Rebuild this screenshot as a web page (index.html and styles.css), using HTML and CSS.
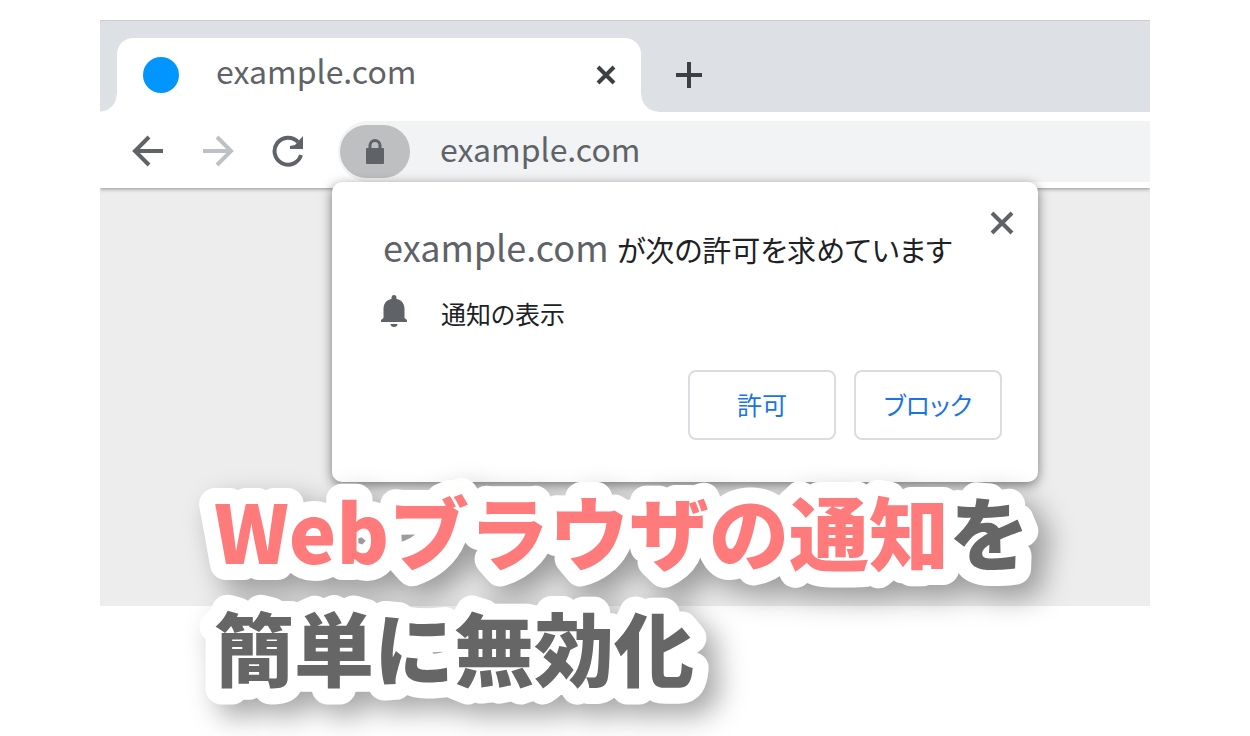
FILE: index.html
```html
<!DOCTYPE html>
<html lang="ja">
<head>
<meta charset="utf-8">
<title>Webブラウザの通知を簡単に無効化</title>
<meta name="viewport" content="width=device-width, initial-scale=1">
<link rel="stylesheet" href="styles.css">
</head>
<body>
<main class="cover">
  <section class="browser">
    <div class="tab-strip">
      <div class="tab">
        <span class="favicon"></span>
        <span class="tab-title">example.com</span>
        <button class="icon-button" aria-label="タブを閉じる">
          <svg class="tab-close" viewBox="0 0 20 20"><path d="M2 2 18 18M18 2 2 18"/></svg>
        </button>
      </div>
      <button class="icon-button" aria-label="新しいタブ">
        <svg class="tab-add" viewBox="0 0 28 28"><path d="M14 1V27M1 14H27"/></svg>
      </button>
    </div>
    <div class="toolbar">
      <nav class="nav">
        <button class="icon-button" aria-label="戻る">
          <svg class="arrow" viewBox="0 0 32 32"><path d="M31 16H3M17 2 3 16 17 30"/></svg>
        </button>
        <button class="icon-button" aria-label="進む">
          <svg class="arrow arrow-off" viewBox="0 0 32 32"><path d="M1 16H29M15 2 29 16 15 30"/></svg>
        </button>
        <button class="icon-button" aria-label="再読み込み">
          <svg class="reload" viewBox="0 0 32 32"><path class="line" d="M29 20A13.500 13.500 0 1 1 26 7"/><path class="solid" d="M31 1V14H18V11L23 10Z"/></svg>
        </button>
      </nav>
      <div class="omnibox">
        <button class="site-info" aria-label="サイト情報">
          <svg class="lock" viewBox="0 0 18 26"><path class="line" d="M4 10V6.500A5 5 0 0 1 14 6.500V10"/><rect class="solid" y="9" width="18" height="16" rx="1"/></svg>
        </button>
        <input class="address" aria-label="アドレス" value="example.com">
      </div>
    </div>
    <div class="page"></div>
    <div class="prompt" role="dialog" aria-labelledby="prompt-title">
      <button class="icon-button prompt-close" aria-label="閉じる">
        <svg class="dialog-close" viewBox="0 0 24 24"><path d="M2 2 22 22M22 2 2 22"/></svg>
      </button>
      <p class="prompt-title" id="prompt-title"><span class="origin">example.com</span> が次の許可を求めています</p>
      <div class="permission">
        <svg class="bell" viewBox="0 0 26 32"><path d="M13 0c1.600 0 2.500 1 2.500 3v1C21 5 23.500 9 23.500 14v9L26 25v2H0v-2l2.500-2v-9C2.500 9 5 5 10.500 4V3c0-2 .9-3 2.500-3ZM9.500 29h7c0 2-1.500 3-3.500 3s-3.500-1-3.500-3Z"/></svg>
        <span>通知の表示</span>
      </div>
      <div class="actions">
        <button class="action">許可</button>
        <button class="action">ブロック</button>
      </div>
    </div>
  </section>
  <h1 class="headline">
    <svg class="headline-art" width="810" height="232">
      <use class="outline" href="#headline-text"/>
      <text id="headline-text"><tspan class="accent" x="0" y="94">Webブラウザの通知</tspan><tspan class="plain">を</tspan><tspan class="plain" x="0" y="210">簡単に無効化</tspan></text>
    </svg>
  </h1>
</main>
</body>
</html>
```
FILE: styles.css
```css
* { box-sizing: border-box; }

body {
  margin: 0;
  background: #fff;
  color: #5f6368;
  font-family: "Noto Sans CJK JP", sans-serif;
}

button, input {
  border: 0;
  padding: 0;
  margin: 0;
  background: none;
  color: inherit;
  font: inherit;
}

svg { display: block; fill: none; stroke: currentColor; }

.cover {
  position: relative;
  min-height: 100vh;
  padding: 20px 8%;
  overflow: hidden;
}

.browser { position: relative; }

.tab-strip {
  display: flex;
  align-items: center;
  gap: 34px;
  height: 92px;
  padding: 17px 17px 0;
  border-top: 1px solid #cdcdcf;
  background: #dde1e6;
  color: #3c4043;
}

.tab {
  position: relative;
  display: flex;
  align-items: center;
  width: 524px;
  height: 100%;
  padding: 0 25px 0 26px;
  border-radius: 16px 16px 0 0;
  background: #fff;
}

.tab::before, .tab::after {
  content: "";
  position: absolute;
  bottom: 0;
  width: 17px;
  height: 17px;
}
.tab::before { right: 100%; background: radial-gradient(circle at 0 0, transparent 16px, #fff 17px); }
.tab::after { left: 100%; background: radial-gradient(circle at 100% 0, transparent 16px, #fff 17px); }

.favicon {
  width: 36px;
  height: 36px;
  margin-right: 37px;
  border-radius: 50%;
  background: #0095ff;
}

.tab-title {
  flex: 1;
  color: #5f6368;
  font-size: 32px;
  line-height: 40px;
  padding-bottom: 10px;
}

.icon-button { display: block; flex: none; }

.tab-close { width: 20px; height: 20px; stroke-width: 4; }
.tab-add { width: 28px; height: 28px; stroke-width: 4; }

.toolbar {
  position: relative;
  z-index: 1;
  display: flex;
  align-items: center;
  height: 76px;
  padding: 3px 0 0 32px;
  background: #fff;
  box-shadow: 0 1px 4px rgba(0, 0, 0, .4);
  clip-path: inset(0 0 -8px 0);
}

.nav { display: flex; gap: 38px; margin-right: 34px; padding-bottom: 2px; }
.arrow, .reload { width: 32px; height: 32px; stroke-width: 4; }
.arrow-off { color: #bdc1c6; }
.line { stroke-width: 4; }
.solid { fill: currentColor; stroke: none; }

.omnibox {
  display: flex;
  flex: 1;
  align-items: center;
  height: 61px;
  padding-left: 2px;
  border-radius: 30px 0 0 30px;
  background: #f1f3f4;
}

.site-info {
  display: flex;
  flex: none;
  align-items: center;
  justify-content: center;
  width: 70px;
  height: 53px;
  border-radius: 27px;
  background: #bdbfc1;
}

.lock { width: 18px; height: 26px; }
.lock .line { stroke-width: 3; }

.address {
  flex: 1;
  min-width: 0;
  height: 54px;
  margin-left: 30px;
  padding-bottom: 8px;
  font-size: 32px;
}

.page { height: 418px; background: #ededed; }

.prompt {
  position: absolute;
  z-index: 2;
  top: 162px;
  left: 232px;
  width: 706px;
  padding: 42px 36px 42px 49px;
  border-radius: 10px;
  background: #fff;
  box-shadow: 0 3px 12px rgba(0, 0, 0, .5);
}

.prompt-close { position: absolute; top: 29px; right: 24px; }
.dialog-close { width: 24px; height: 24px; stroke-width: 4; }

.prompt-title {
  margin: 0 0 0 2px;
  color: #202124;
  font-size: 29px;
  line-height: 50px;
  font-feature-settings: "palt";
}
.origin { margin-right: 2px; color: #5f6368; font-size: 36px; line-height: 1; }

.permission {
  display: flex;
  align-items: center;
  gap: 34px;
  height: 50px;
  margin-top: 14px;
  color: #202124;
  font-size: 25px;
  font-feature-settings: "palt";
}
.bell { width: 26px; height: 32px; margin-bottom: 4px; fill: #5f6368; stroke: none; }

.actions { display: flex; justify-content: flex-end; gap: 18px; margin-top: 32px; }

.action {
  width: 148px;
  height: 70px;
  padding-bottom: 2px;
  border: 2px solid #dadce0;
  border-radius: 8px;
  color: #1a73e8;
  font-size: 25px;
  font-feature-settings: "palt";
}

.headline {
  position: absolute;
  z-index: 3;
  top: 470px;
  left: 214px;
  margin: 0;
  font-size: 80px;
  font-weight: 900;
}

.headline-art {
  --accent: #ff7b7b;
  --plain: #666;
  overflow: visible;
  stroke: none;
}
.accent { fill: var(--accent); }
.plain { fill: var(--plain); }

/* White rounded outline with a soft shadow, painted behind the text. */
.outline {
  --accent: #fff;
  --plain: #fff;
  stroke: #fff;
  stroke-width: 32px;
  stroke-linejoin: round;
  filter: drop-shadow(12px 12px 14px rgba(0, 0, 0, .35));
}
```
